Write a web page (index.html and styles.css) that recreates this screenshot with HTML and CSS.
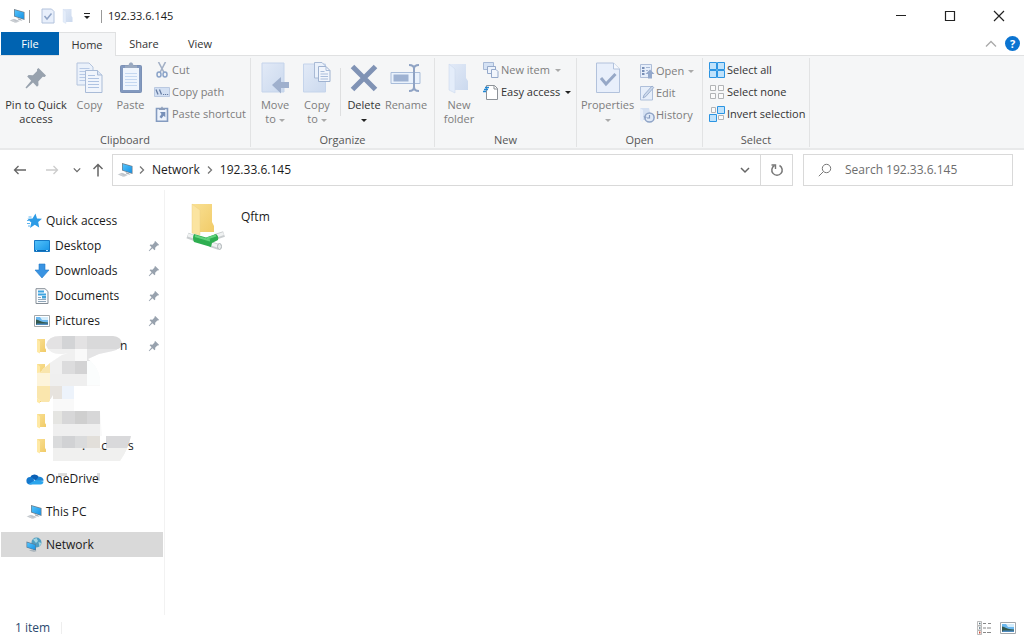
FILE: index.html
```html
<!DOCTYPE html>
<html lang="en">
<head>
<meta charset="utf-8">
<title>192.33.6.145</title>
<link rel="stylesheet" href="styles.css">
</head>
<body>
<svg class="defs" aria-hidden="true">
  <defs>
    <linearGradient id="g-screen" x1="0" y1="0" x2="1" y2="1"><stop offset="0" stop-color="#55c3fb"/><stop offset="1" stop-color="#1593e6"/></linearGradient>
    <linearGradient id="g-folder" x1="0" y1="0" x2="1" y2="1"><stop offset="0" stop-color="#f9e093"/><stop offset="1" stop-color="#f1cb68"/></linearGradient>
    <linearGradient id="g-pale" x1="0" y1="0" x2="1" y2="1"><stop offset="0" stop-color="#e2eaf7"/><stop offset="1" stop-color="#cbd9ee"/></linearGradient>
    <symbol id="pc" viewBox="0 0 16 16">
      <path d="M5 1 15.500 4v8L5 8.600z" fill="#6d7c89"/><path d="M5.700 2 14.800 4.600v6.300L5.700 7.900z" fill="url(#g-screen)"/>
      <path d="M8.500 10 12 11.200l1.500 1.600-4-.8z" fill="#a6adb4"/><path d="M.5 12.500 5 10.800l6 2.300-4 1.900z" fill="#d5d8dc"/><path d="M1.800 12.600 5 11.500l4.500 1.700M3.500 13.500l3.500-1.300M5.200 14.200l3.400-1.300" fill="none" stroke="#aeb4ba" stroke-width=".5"/>
    </symbol>
    <symbol id="pin" viewBox="0 0 24 24">
      <path d="M14.500 2 22 9.500l-1.300 1.500-2-.2-4.400 4.600.2 3.800-1.500 1.500-4-4.100L2.500 22.500 1.500 21.500l5.700-6.800-4-4.100 1.400-1.500 4.300.2 4.200-4.200-.1-1.800z" fill="#98a2ae"/>
    </symbol>
    <symbol id="docs" viewBox="0 0 28 32">
      <path d="M1 1h12l4 4v18H1z" fill="#eaf1fb" stroke="#b4c4dd"/><path d="M3.500 6.500h10M3.500 9.500h10M3.500 12.500h10M3.500 15.500h6M3.500 18.500h6" stroke="#b7c9e6"/>
      <path d="M9.500 8.500h12l4.500 4.500v17.500H9.500z" fill="#f1f5fc" stroke="#a9bbd7"/><path d="M21.500 8.500V13H26" fill="#dbe5f4" stroke="#a9bbd7"/><path d="M12 13.500h7M12 16.500h11M12 19.500h11M12 22.500h11M12 25.500h11" stroke="#afc3e2"/>
    </symbol>
    <symbol id="paste" viewBox="0 0 24 32">
      <rect x="1.500" y="3.500" width="21" height="27" rx="1" fill="#8299bf" stroke="#7b90b5"/><path d="M4 6h16v22H4z" fill="#eff5fd"/><path d="M6 11.500h12M6 14.500h12M6 17.500h12M6 20.500h12M6 23.500h12" stroke="#c5d8f1"/><path d="M6 6V3.500h3.500C10 1 11 .5 12 .5s2 .5 2.500 3H18V6z" fill="#9aa9c0"/>
    </symbol>
    <symbol id="cut" viewBox="0 0 14 16">
      <path d="M3.500 0 9 10.500M10.500 0 5 10.500" stroke="#a3b0c6" stroke-width="1.600"/><ellipse cx="4" cy="12.500" rx="2" ry="2.500" fill="none" stroke="#8ca4c9" stroke-width="1.500"/><ellipse cx="10" cy="12.500" rx="2" ry="2.500" fill="none" stroke="#8ca4c9" stroke-width="1.500"/>
    </symbol>
    <symbol id="path" viewBox="0 0 16 16">
      <path d="M.5 3.500h15v9H.5z" fill="#d3e0f3" stroke="#bac9e1"/><path d="m2 5.500 2 5M5.500 5.500l2 5" stroke="#667da5" stroke-width="1.300"/><path d="M9 10.500h1.200M11 10.500h1.200M13 10.500h1.200" stroke="#667da5"/>
    </symbol>
    <symbol id="shortcut" viewBox="0 0 14 16">
      <path d="M1.500 2.500h11v12.700h-11z" fill="#edf3fc" stroke="#849bc0" stroke-width="1.600"/><path d="M4 4V2h2L7 .3 8 2h2v2z" fill="#8c9dba"/><path d="M5 6h5.300v5.300L8.600 9.700 6.500 12.500 4.500 11l2-3z" fill="#7790b9"/>
    </symbol>
    <symbol id="move" viewBox="0 0 28 32">
      <path d="M1 1h22v29H1z" fill="url(#g-pale)" stroke="#c5d4eb"/><path d="M11 23l9-8v5h8v6h-8v5.500z" fill="#9fb0cd"/>
    </symbol>
    <symbol id="copyto" viewBox="0 0 30 32">
      <path d="M1.500 2h22v28h-22z" fill="url(#g-pale)" stroke="#c5d4eb"/><path d="M12.500.5H20l3 3V16H12.500z" fill="#eaf1fb" stroke="#a9bad5"/><path d="M16.500 4.500H24l4 4V19.500H16.500z" fill="#f1f5fc" stroke="#9fb2d0"/><path d="M24 4.500v4h4M18.500 9.500h4M18.500 12h7.500M18.500 14.500h7.500M18.500 17h7.500" fill="none" stroke="#a9bddb"/>
    </symbol>
    <symbol id="delete" viewBox="0 0 28 28">
      <path d="M2.500 2.500 25.500 25.500M25.500 2.500 2.500 25.500" stroke="#8093b5" stroke-width="5"/>
    </symbol>
    <symbol id="rename" viewBox="0 0 32 32">
      <path d="M1 10.500h29v11H1z" fill="#eaf2fc" stroke="#a9bdda"/><path d="M3.500 12.500h15v7h-15z" fill="#9eb2d2"/><path d="M19 3q5 0 5 3.500 0-3.500 5-3.500M24 6v19M19 29q5 0 5-4 0 4 5 4" fill="none" stroke="#8fa3c4" stroke-width="2"/>
    </symbol>
    <symbol id="palefolder" viewBox="0 0 22 32">
      <path d="M1 2h17v14l2 3v9H1z" fill="url(#g-pale)"/><path d="M1 2l6 5v24l-6-3z" fill="#e4edfa" stroke="#cddaee" stroke-width=".6"/>
    </symbol>
    <symbol id="newitem" viewBox="0 0 16 16">
      <path d="M.5.500h10v7H.5z" fill="#d5e2f4" stroke="#a7b9d6"/><path d="M4.500 4.500h8v7h-8z" fill="#edf3fc" stroke="#95a9ca"/><path d="M8.500 7.500H13l2 2v6H8.500z" fill="#f2f6fc" stroke="#95a9ca"/>
    </symbol>
    <symbol id="easy" viewBox="0 0 16 16">
      <path d="M3.500 1.500h8l3 3v11h-11z" fill="#fff" stroke="#8d9298"/><path d="M11 1.500V5h3.500" fill="none" stroke="#8d9298"/><path d="M2 3.500h4M1 5.500h4M0 7.500h3" stroke="#2187d4" stroke-width="1.300"/>
    </symbol>
    <symbol id="props" viewBox="0 0 26 32">
      <path d="M1.500 1h17l6 6v23.500h-23z" fill="#e8effb" stroke="#b2c2dc"/><path d="M18.500 1v6h6" fill="#f7f9fd" stroke="#b2c2dc"/><path d="m6 16 5 6 9.500-10" fill="none" stroke="#96a8c7" stroke-width="3"/>
    </symbol>
    <symbol id="open" viewBox="0 0 16 16">
      <path d="M1.500 1.500h11v13h-11z" fill="#e6eefa" stroke="#afbed8"/><path d="M3 4h2.500v2H3zM3 7h2.500v2H3zM3 10h2.500v2H3z" fill="#778eb6"/><path d="M7 4.500h4M7 7.500h2" stroke="#a7b8d4"/><path d="M11 6.500 15.500 11H13v4.500H9V11H6.500z" fill="#93a8cb"/>
    </symbol>
    <symbol id="edit" viewBox="0 0 16 16">
      <path d="M1.500 1.500h12v13.500h-12z" fill="#e6eefa" stroke="#aebfda"/><path d="m4 13 1-3 8-9 1.800 1.500-8 9z" fill="#cbd8eb" stroke="#91a6c8" stroke-width=".8"/>
    </symbol>
    <symbol id="history" viewBox="0 0 16 16">
      <path d="M1 1h9l1 4v8H1z" fill="#d4e0f2"/><path d="M1 1l3 2v12l-3-2z" fill="#e8effa"/><circle cx="10.500" cy="10.500" r="4.600" fill="#dfe9f8" stroke="#8ea3c6" stroke-width="1.500"/><path d="M10.500 8v3H8" fill="none" stroke="#8298bd" stroke-width="1.200"/><path d="M4.500 9 6 12l2-2z" fill="#8ea3c6"/>
    </symbol>
    <symbol id="selall" viewBox="0 0 16 16">
      <path d="M.5.500h7v7H.5zM8.500.500h7v7h-7zM.5 8.500h7v7H.5zM8.500 8.500h7v7h-7z" fill="#bfe2fb" stroke="#2b94e2"/>
    </symbol>
    <symbol id="selnone" viewBox="0 0 16 16">
      <path d="M1.500 1.500h5v5h-5zM9.500 1.500h5v5h-5zM1.500 9.500h5v5h-5zM9.500 9.500h5v5h-5z" fill="#fbfbfb" stroke="#b2b4b6"/>
    </symbol>
    <symbol id="selinv" viewBox="0 0 16 16">
      <path d="M2.500 1.500h4v5h-4zM9.500 9.500h5v4h-5z" fill="#fbfbfb" stroke="#b2b4b6"/><path d="M8.500.500h7v7h-7zM.5 8.500h7v7H.5z" fill="#bfe2fb" stroke="#2b94e2"/>
    </symbol>
    <symbol id="check" viewBox="0 0 14 16">
      <path d="M1 1h9.500L13 3.500V15H1z" fill="#e8effb" stroke="#b2c2dc"/><path d="m3.500 8 2.500 3L10.500 5.500" fill="none" stroke="#90a4c6" stroke-width="1.500"/>
    </symbol>
    <symbol id="left" viewBox="0 0 14 14"><path d="M13 7H1.500M5.500 3l-4 4 4 4" fill="none" stroke="currentColor" stroke-width="1.300"/></symbol>
    <symbol id="right" viewBox="0 0 14 14"><path d="M1 7h11.500M8.500 3l4 4-4 4" fill="none" stroke="currentColor" stroke-width="1.300"/></symbol>
    <symbol id="up" viewBox="0 0 14 14"><path d="M7 13.500V1.500M2.500 6 7 1.500 11.500 6" fill="none" stroke="currentColor" stroke-width="1.500"/></symbol>
    <symbol id="chev" viewBox="0 0 10 10"><path d="m1 3 4 4 4-4" fill="none" stroke="currentColor" stroke-width="1.500"/></symbol>
    <symbol id="crumb" viewBox="0 0 10 10"><path d="m3 1.500 3.500 3.500L3 8.500" fill="none" stroke="#777" stroke-width="1.300"/></symbol>
    <symbol id="caret" viewBox="0 0 6 6"><path d="M0 2h6L3 5z" fill="currentColor"/></symbol>
    <symbol id="star" viewBox="0 0 16 16"><path d="m9.500.5 1.500 5 5 .2-3.800 3.300 1 5.500-4.400-2.800-4.800 3.200 1.300-5.500L3.500 8l-2-2.300 5-.3z" fill="#2c9be6"/><path d="M1 7.500h3M1 10.500h3M2 13h2M2.500 4h3" stroke="#5db4ee"/></symbol>
    <symbol id="desktop" viewBox="0 0 16 16"><path d="M.5 2.500h15v11H.5z" fill="url(#g-screen)" stroke="#1679c5"/><path d="M1 12.500h14" stroke="#0a68b1"/><path d="M2 12.500h1M12 12.500h2" stroke="#bce5ff"/></symbol>
    <symbol id="down" viewBox="0 0 16 16"><path d="M5 1h6v6h4l-7 8-7-8h4z" fill="#3993e2" stroke="#2479c8" stroke-width=".6"/></symbol>
    <symbol id="doc" viewBox="0 0 16 16"><path d="M2 .700h9L14 3.500v12H2z" fill="#fafcfe" stroke="#858e97"/><path d="M4 3.500h6M4 6.500h8" stroke="#3fa4df" stroke-width="1.800"/><path d="M4 9.500h3M4 11.500h8M4 13.500h8" stroke="#8fa6b9"/><path d="M8 8h4v2.500H8z" fill="#43a3d9"/></symbol>
    <symbol id="pic" viewBox="0 0 16 16"><path d="M.5 2.500h15v11H.5z" fill="#fff" stroke="#a3a8ac"/><path d="M2 4h12v8H2z" fill="#6cb8ef"/><path d="M6 4h8v3H8z" fill="#d3edfc"/><path d="M2 6.500c3 0 4 3 12 3V12H2z" fill="#33594f"/><path d="M3 10.500h11V12H2z" fill="#4f8bc0"/></symbol>
    <symbol id="folder" viewBox="0 0 16 16"><path d="M3 1h8v9l1 1.500V14H3z" fill="url(#g-folder)"/><path d="M3 1l3 2.500V15.500L3 14z" fill="#ffe9a5"/></symbol>
    <symbol id="cloud" viewBox="0 0 18 12"><path d="M4 4.500A5 5 0 0 1 13 4l-2 4z" fill="#0b60b5"/><path d="M13 3.800a4 4 0 0 1 4.600 4L9 8z" fill="#1b86d5"/><circle cx="4.200" cy="7.800" r="3.800" fill="#1478cd"/><path d="M2.500 11 9.500 7l8 1.500A3.200 3.200 0 0 1 14.500 11.500H4z" fill="#2aa5ed"/></symbol>
    <symbol id="net" viewBox="0 0 16 16"><circle cx="10.500" cy="5.500" r="5" fill="#4f9dc0"/><path d="M7 2.500 10.500 1 12 4l-2 2zM12.500 5l3 1-2 4z" fill="#a2d5e2"/><path d="M.5 4.500l9.500 3v6.200L.5 10.500z" fill="#5c7c96"/><path d="M1.200 5.500l8.100 2.600v4.600L1.200 10z" fill="url(#g-screen)"/><path d="m3 13.500 3-1 5 1.500-3 1z" fill="#abb5bc"/></symbol>
    <symbol id="netfolder" viewBox="0 0 40 48">
      <path d="M6 2h20v18l2 4v6H6z" fill="url(#g-folder)"/><path d="M6 2l8 6v25l-8-2z" fill="#fbe4a0" stroke="#eed184" stroke-width=".5"/>
      <path d="m1.500 33.500 8 3" stroke="#c9cdcf" stroke-width="6"/><path d="m2 33 7.500 2.500" stroke="#f0f2f2" stroke-width="3"/><path d="m29 35 9-3" stroke="#c9cdcf" stroke-width="6"/><path d="m29 34.500 8.500-2.800" stroke="#f0f2f2" stroke-width="3"/><path d="m24 42 9 3" stroke="#c9cdcf" stroke-width="6"/><path d="m24 41.500 9 3" stroke="#f0f2f2" stroke-width="3"/><ellipse cx="33.500" cy="44.500" rx="2" ry="3" fill="#e7eaeb" stroke="#afb5b8"/>
      <path d="m8 32 12 3.500 10-3.500q3 2 2 6l-6 3-1 4L8 40q-2-4 0-8z" fill="#2eae50"/><path d="M9 34 24 38.500M21 36.500l9-3" fill="none" stroke="#63d37e" stroke-width="2"/>
    </symbol>
  </defs>
</svg>

<div class="window">
  <header class="titlebar">
    <svg class="i16"><use href="#pc"/></svg>
    <span class="bar"></span>
    <button class="quick" aria-label="Properties"><svg class="i16"><use href="#check"/></svg></button>
    <button class="quick" aria-label="New folder"><svg class="i16"><use href="#palefolder"/></svg></button>
    <button class="quick slim" aria-label="Customize toolbar"><svg class="i8" viewBox="0 0 8 8"><path d="M1 1.500h6" stroke="#222"/><path d="M1 4h6L4 7z" fill="#222"/></svg></button>
    <span class="bar dark"></span>
    <h1 class="title">192.33.6.145</h1>
    <div class="controls">
      <button aria-label="Minimize"><svg class="i12" viewBox="0 0 12 12"><path d="M1 5.500h10" stroke="#222"/></svg></button>
      <button aria-label="Maximize"><svg class="i12" viewBox="0 0 12 12"><path d="M1.500 1.500h9v9h-9z" fill="none" stroke="#222" stroke-width="1.200"/></svg></button>
      <button aria-label="Close"><svg class="i12" viewBox="0 0 12 12"><path d="m1 1 10 10M11 1 1 11" stroke="#222" stroke-width="1.200"/></svg></button>
    </div>
  </header>

  <nav class="tabs">
    <button class="tab file">File</button>
    <button class="tab active">Home</button>
    <button class="tab">Share</button>
    <button class="tab">View</button>
    <span class="grow"></span>
    <button class="mini" aria-label="Collapse ribbon"><svg class="i12" viewBox="0 0 12 12"><path d="m1 8.500 5-5 5 5" fill="none" stroke="#aaa" stroke-width="1.300"/></svg></button>
    <button class="help" aria-label="Help">?</button>
  </nav>

  <section class="ribbon">
    <div class="group clipboard">
      <div class="tools">
        <button class="big wide on"><svg class="i24"><use href="#pin"/></svg><span>Pin to Quick access</span></button>
        <button class="big"><svg class="i32"><use href="#docs"/></svg><span>Copy</span></button>
        <button class="big"><svg class="i32"><use href="#paste"/></svg><span>Paste</span></button>
        <div class="stack">
          <button class="small"><svg class="i16"><use href="#cut"/></svg>Cut</button>
          <button class="small"><svg class="i16"><use href="#path"/></svg>Copy path</button>
          <button class="small"><svg class="i16"><use href="#shortcut"/></svg>Paste shortcut</button>
        </div>
      </div>
      <h2>Clipboard</h2>
    </div>
    <div class="group organize">
      <div class="tools">
        <button class="big"><svg class="i32"><use href="#move"/></svg><span>Move<br>to <svg class="caret"><use href="#caret"/></svg></span></button>
        <button class="big"><svg class="i32"><use href="#copyto"/></svg><span>Copy<br>to <svg class="caret"><use href="#caret"/></svg></span></button>
        <span class="rule"></span>
        <button class="big on"><svg class="i32 pad"><use href="#delete"/></svg><span>Delete<br><svg class="caret"><use href="#caret"/></svg></span></button>
        <button class="big"><svg class="i32"><use href="#rename"/></svg><span>Rename</span></button>
      </div>
      <h2>Organize</h2>
    </div>
    <div class="group new">
      <div class="tools">
        <button class="big"><svg class="i32"><use href="#palefolder"/></svg><span>New<br>folder</span></button>
        <div class="stack">
          <button class="small"><svg class="i16"><use href="#newitem"/></svg>New item<svg class="caret"><use href="#caret"/></svg></button>
          <button class="small on"><svg class="i16"><use href="#easy"/></svg>Easy access<svg class="caret"><use href="#caret"/></svg></button>
        </div>
      </div>
      <h2>New</h2>
    </div>
    <div class="group open">
      <div class="tools">
        <button class="big wide"><svg class="i32"><use href="#props"/></svg><span>Properties<br><svg class="caret"><use href="#caret"/></svg></span></button>
        <div class="stack">
          <button class="small"><svg class="i16"><use href="#open"/></svg>Open<svg class="caret"><use href="#caret"/></svg></button>
          <button class="small"><svg class="i16"><use href="#edit"/></svg>Edit</button>
          <button class="small"><svg class="i16"><use href="#history"/></svg>History</button>
        </div>
      </div>
      <h2>Open</h2>
    </div>
    <div class="group select">
      <div class="tools">
        <div class="stack">
          <button class="small on"><svg class="i16"><use href="#selall"/></svg>Select all</button>
          <button class="small on"><svg class="i16"><use href="#selnone"/></svg>Select none</button>
          <button class="small on"><svg class="i16"><use href="#selinv"/></svg>Invert selection</button>
        </div>
      </div>
      <h2>Select</h2>
    </div>
  </section>

  <div class="location">
    <div class="history">
      <button aria-label="Back"><svg class="i14"><use href="#left"/></svg></button>
      <button class="off" aria-label="Forward"><svg class="i14"><use href="#right"/></svg></button>
      <button class="recent" aria-label="Recent locations"><svg class="i8"><use href="#chev"/></svg></button>
      <button class="parent" aria-label="Up"><svg class="i14"><use href="#up"/></svg></button>
    </div>
    <div class="address">
      <svg class="i16"><use href="#pc"/></svg>
      <svg class="i10"><use href="#crumb"/></svg>
      <a href="#network">Network</a>
      <svg class="i10"><use href="#crumb"/></svg>
      <a href="#host">192.33.6.145</a>
      <span class="grow"></span>
      <button aria-label="Previous locations"><svg class="i10"><use href="#chev"/></svg></button>
      <button class="refresh" aria-label="Refresh"><svg class="i14" viewBox="0 0 14 14"><path d="M9.500 2.500a5.200 5.200 0 1 1-5 0" fill="none" stroke="#777" stroke-width="1.500"/><path d="M1.500 2h4v4" fill="none" stroke="#777" stroke-width="1.400"/></svg></button>
    </div>
    <label class="search">
      <svg class="i14" viewBox="0 0 14 14"><circle cx="8.500" cy="5.500" r="4.200" fill="none" stroke="#777"/><path d="M5.500 8.500.800 13.200" stroke="#777"/></svg>
      <input type="text" placeholder="Search 192.33.6.145" aria-label="Search 192.33.6.145">
    </label>
  </div>

  <main class="body">
    <nav class="tree">
      <a class="node root" href="#quick"><svg class="i16"><use href="#star"/></svg>Quick access</a>
      <a class="node" href="#desktop-dir"><svg class="i16"><use href="#desktop"/></svg>Desktop<svg class="pin"><use href="#pin"/></svg></a>
      <a class="node" href="#downloads"><svg class="i16"><use href="#down"/></svg>Downloads<svg class="pin"><use href="#pin"/></svg></a>
      <a class="node" href="#documents"><svg class="i16"><use href="#doc"/></svg>Documents<svg class="pin"><use href="#pin"/></svg></a>
      <a class="node" href="#pictures"><svg class="i16"><use href="#pic"/></svg>Pictures<svg class="pin"><use href="#pin"/></svg></a>
      <div class="masked">
        <svg class="mosaic" viewBox="36 334 100 130" aria-hidden="true">
          <defs>
            <clipPath id="m1"><path d="M46 345Q48 336 60 336H113Q121 337 122 343 122 349 113 351L99 354 88 359Q97 365 100 378V386H74V411H100L102 436H131Q128 450 120 461H53V395L49 402H42L37 398V373Q41 373 43 369L50 363 62 355 69 353Q50 357 46 345z"/></clipPath>
          </defs>
          <g clip-path="url(#m1)">
            <path d="M36 334h100v130H36z" fill="#f9f9f9"/>
            <path d="M74 386h30v25H74z" fill="#fff"/><path d="M87 361h15v24H87z" fill="#fbfdfd"/>
            <path d="M45 336h17v13H45zM75 336h12v13H75z" fill="#e3e2e3"/><path d="M62 336h13v13H62z" fill="#d3d4d6"/><path d="M87 336h35v13H87z" fill="#d9d9da"/>
            <path d="M87 349h30v12H87z" fill="#e4e4e5"/><path d="M45 349h30v12H45z" fill="#f0f0f0"/><path d="M50 361h12v13H50z" fill="#f0f0f0"/>
            <path d="M62 361h13v13H62z" fill="#dcdcdd"/><path d="M75 361h12v13H75z" fill="#d3d3d4"/><path d="M50 374h37v12H50z" fill="#efefef"/>
            <path d="M36 361h14v12H36z" fill="#f9e5ad"/><path d="M36 373h14v13H36z" fill="#fdf4db"/><path d="M36 386h14v16H36z" fill="#fae6ad"/><path d="M50 386h12v13H50z" fill="#e7e3de"/><path d="M62 386h12v13H62z" fill="#edf3fb"/>
            <path d="M53 411h9v13h-9z" fill="#e5e5e2"/><path d="M62 411h13v13H62zM87 411h13v13H87z" fill="#d7d7d8"/><path d="M75 411h12v13H75z" fill="#cfcfcf"/><path d="M53 424h47v12H53z" fill="#efefef"/>
            <path d="M53 436h9v12h-9zM75 436h12v12H75z" fill="#dadbdc"/><path d="M62 436h13v12H62z" fill="#d1d2d4"/><path d="M87 436h13v12H87z" fill="#e2dfda"/><path d="M106 436h25v12h-25z" fill="#d9d9db"/><path d="M53 448h77v13H53z" fill="#f0f0ef"/><path d="M100 436h6v12h-6z" fill="#fff"/>
          </g>
        </svg>
        <a class="node" href="#f1"><svg class="i16"><use href="#folder"/></svg><span class="tail first">n</span><svg class="pin"><use href="#pin"/></svg></a>
        <a class="node" href="#f2" aria-label="Folder"><svg class="i16"><use href="#folder"/></svg></a>
        <a class="node" href="#f3" aria-label="Folder"><svg class="i16"><use href="#folder"/></svg></a>
        <a class="node" href="#f4" aria-label="Folder"><svg class="i16"><use href="#folder"/></svg></a>
        <a class="node" href="#f5"><svg class="i16"><use href="#folder"/></svg><span class="tail second">.</span><span class="tail third">c</span><span class="tail fourth">s</span></a>
      </div>
      <a class="node root spaced" href="#onedrive"><svg class="i18"><use href="#cloud"/></svg><span class="smudged">OneDrive</span></a>
      <a class="node root spaced" href="#pc-dir"><svg class="i16"><use href="#pc"/></svg>This PC</a>
      <a class="node root spaced current" href="#network"><svg class="i16"><use href="#net"/></svg>Network</a>
    </nav>
    <section class="files">
      <a class="tile" href="#qftm"><svg class="i48"><use href="#netfolder"/></svg><span>Qftm</span></a>
    </section>
  </main>

  <footer class="status">
    <span class="count">1 item</span>
    <button aria-label="Details view"><svg class="i16" viewBox="0 0 16 16"><path d="M1.500 1.500h4v4h-4zM1.500 6h4v4h-4zM1.500 10.500h4v4h-4z" fill="#fff" stroke="#a9a9a9" stroke-width=".8"/><path d="M3 3.500h1.500M3 8h1.500" stroke="#55707d" stroke-width="1.500"/><path d="M3 12.500h1.500" stroke="#d24a32" stroke-width="2"/><path d="M7 3.500h3M12 3.500h3M7 8h3M11 8h4M7 12.500h3M11 12.500h4" stroke="#888"/></svg></button>
    <button aria-label="Large icons view"><svg class="i16"><use href="#pic"/></svg></button>
  </footer>
</div>
</body>
</html>
```

FILE: styles.css
```css
* { box-sizing: border-box; }

body {
  margin: 0;
  background: #fff;
  color: #1b1b1b;
  font: 12px/16px "Open Sans", "Noto Sans", sans-serif;
}

button {
  margin: 0;
  padding: 0;
  border: 0;
  background: none;
  color: inherit;
  font: inherit;
}

a { color: inherit; text-decoration: none; }
h1, h2 { margin: 0; font-weight: 400; }
svg { flex: none; }

.defs { position: absolute; width: 0; height: 0; }
.grow { flex: 1; }
.i8 { width: 8px; height: 8px; }
.i10 { width: 10px; height: 10px; }
.i12 { width: 12px; height: 12px; }
.i14 { width: 14px; height: 14px; }
.i16 { width: 16px; height: 16px; }
.i18 { width: 18px; height: 12px; margin-right: -2px; }
.i24 { width: 24px; height: 24px; margin: 4px; }
.i32 { width: 32px; height: 32px; }
.i48 { width: 40px; height: 48px; }
.pad { padding: 2px; }
.caret { width: 6px; height: 6px; color: #aaa; }
.on .caret { color: #222; }

.window {
  display: flex;
  flex-direction: column;
  min-height: 100vh;
}

/* Title bar */
.titlebar {
  display: flex;
  align-items: center;
  height: 32px;
  padding-left: 9px;
}
.titlebar button { display: flex; align-items: center; justify-content: center; }
.bar { width: 1px; height: 13px; margin: 0 8px 0 4px; background: #999; }
.bar.dark { margin: 0 6px; }
.quick { width: 20px; height: 24px; }
.quick.slim { width: 17px; }
.title { font-size: 11px; }
.controls { display: flex; margin-left: auto; }
.controls button { width: 49px; height: 32px; }
.controls button:last-child { margin-right: 1px; }

/* Ribbon tabs */
.tabs {
  display: flex;
  height: 24px;
  padding: 0 4px 0 1px;
  border-bottom: 1px solid #e0e1e2;
  font-size: 11px;
}
.tab { width: 56px; height: 23px; color: #333; }
.tab.file { width: 58px; background: #0063b1; color: #fff; }
.tab.active { width: 57px; height: 24px; border: 1px solid #e0e1e2; border-bottom: 0; border-left: 0; background: #f5f6f7; line-height: 20px; }
.mini { display: flex; align-items: center; margin-right: 8px; }
.help {
  align-self: center;
  width: 15px;
  height: 15px;
  border-radius: 50%;
  background: #0b74d1;
  color: #fff;
  font-weight: 700;
  line-height: 15px;
}

/* Ribbon */
.ribbon {
  display: flex;
  padding: 2px 0 1px;
  border-bottom: 2px solid #e8e9ea;
  background: #f5f6f7;
  color: #7d7d7d;
  font-size: 11px;
  line-height: 14px;
}
.group {
  display: flex;
  flex-direction: column;
  border-right: 1px solid #e2e3e4;
}
.group h2 { color: #555; font-size: 11px; line-height: 15px; text-align: center; }
.tools { display: flex; height: 74px; padding-left: 3px; }
.clipboard { width: 251px; }
.organize { width: 184px; }
.new { width: 142px; }
.open { width: 126px; }
.open .tools { padding-left: 0; }
.select { width: 107px; }
.on { color: #333; }
.big {
  display: flex;
  flex-direction: column;
  align-items: center;
  width: 42px;
  padding-top: 4px;
}
.big span { padding-top: 4px; }
.big.wide { width: 61px; }
.clipboard .big { width: 41px; }
.clipboard .wide { width: 66px; }
.stack { display: flex; flex-direction: column; padding: 1px 0 0 3px; }
.small { display: flex; align-items: center; gap: 2px; height: 22px; white-space: nowrap; }
.open .stack { padding: 2px 0 0 1px; }
.open .small { gap: 1px; }
.small .caret { margin-left: 3px; }
.rule { width: 1px; height: 48px; margin: 10px 2px; background: #dedfe0; }

/* Address row */
.location { display: flex; padding: 4px 11px 4px 0; }
.history { display: flex; width: 112px; padding-left: 4px; color: #666; }
.history button { display: flex; align-items: center; justify-content: center; width: 32px; }
.history .recent { width: 18px; }
.history .parent { width: 24px; }
.history .off { color: #ccc; }
.address {
  display: flex;
  flex: 1;
  align-items: center;
  gap: 4px;
  height: 32px;
  padding-left: 4px;
  border: 1px solid #d9d9d9;
}
.address a { padding: 0 1px; }
.address button { display: flex; align-items: center; justify-content: center; width: 22px; height: 30px; color: #666; }
.address .refresh { width: 32px; border-left: 1px solid #d9d9d9; }
.search {
  display: flex;
  align-items: center;
  gap: 13px;
  width: 210px;
  margin-left: 10px;
  padding-left: 14px;
  border: 1px solid #d9d9d9;
}
.search input { flex: 1; min-width: 0; padding: 0; border: 0; outline: 0; background: none; font: inherit; }
.search input::placeholder { color: #6d6d6d; opacity: 1; }

/* Folder tree and file list */
.body { display: flex; flex: 1; }
.tree { width: 165px; padding: 18px 1px 0; border-right: 1px solid #f2f2f2; }
.node { display: flex; align-items: center; gap: 5px; height: 25px; padding: 0 3px 0 33px; }
.node.root { gap: 4px; padding-left: 25px; }
.node.spaced { margin-top: 8px; }
.node.current { background: #d9d9d9; }
.pin { width: 12px; height: 12px; margin-left: auto; }
.masked { position: relative; }
.mosaic { position: absolute; left: 35px; top: 1px; width: 100px; height: 130px; }
.tail { position: relative; }
.tail.first { margin-left: 65px; }
.tail.second { margin-left: 27px; }
.tail.third { margin-left: 11px; }
.tail.fourth { margin-left: 16px; }
.smudged {
  padding-right: 1px;
  background:
    linear-gradient(#ddd, #ddd) 12px 2px / 9px 3px no-repeat,
    linear-gradient(#ddd, #ddd) right 2px / 3px 8px no-repeat;
}
.files { flex: 1; padding: 12px 21px; }
.tile { display: inline-flex; gap: 15px; }
.tile span { padding-top: 7px; }

/* Status bar */
.status {
  display: flex;
  align-items: center;
  gap: 8px;
  height: 26px;
  padding: 0 8px 0 15px;
  color: #2b4a6f;
}
.status button { display: flex; }
.count { margin-right: auto; padding-right: 11px; border-right: 1px solid #eee; line-height: 12px; }
```
